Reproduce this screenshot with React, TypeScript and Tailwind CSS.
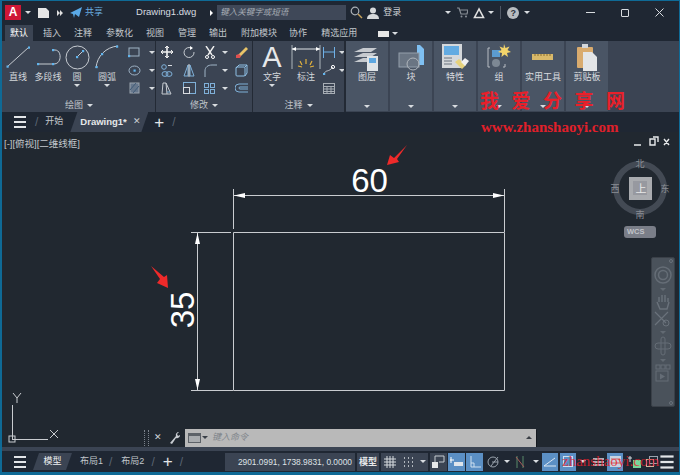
import React from 'react';

const Caret = ({ className = '', dim }: { className?: string; dim?: boolean }) => (
  <span className={`inline-block w-0 h-0 shrink-0 border-l-[3px] border-r-[3px] border-t-[3px] border-l-transparent border-r-transparent ${dim ? 'border-t-[#626a73]' : 'border-t-[#d8dce0]'} ${className}`} />
);

const Icon = ({ w, h, children, className = '' }: { w: number; h: number; children: React.ReactNode; className?: string }) => (
  <svg width={w} height={h} viewBox={`0 0 ${w} ${h}`} fill="none" className={`shrink-0 ${className}`}>
    {children}
  </svg>
);

const Dot = ({ x, y }: { x: number; y: number }) => <rect x={x - 1} y={y - 1} width="2.2" height="2.2" fill="#62b5ee" />;

const Burger = () => (
  <div className="flex flex-col gap-[3px] w-[12px]">
    <div className="h-[2px] bg-[#e2e5e8]" />
    <div className="h-[2px] bg-[#e2e5e8]" />
    <div className="h-[2px] bg-[#e2e5e8]" />
  </div>
);

const Slash = () => <span className="text-[#5a6472] text-[12px] font-light">/</span>;

const Tool = ({ w, label, caret, icon }: { w: number; label: string; caret?: boolean; icon: React.ReactNode }) => (
  <div className="flex flex-col items-center shrink-0" style={{ width: w }}>
    <div className="h-[26px] flex items-center justify-center">{icon}</div>
    <div className="text-[9px] leading-[12px] mt-[1px] text-[#d3d7db] whitespace-nowrap">{label}</div>
    {caret && <Caret className="mt-[1px]" />}
  </div>
);

const SmallRow = ({ children, caret, w = 21 }: { children: React.ReactNode; caret?: boolean; w?: number }) => (
  <div className="h-[18px] flex items-center gap-[4px]" style={{ width: w }}>
    {children}
    {caret && <Caret />}
  </div>
);

const PanelTitle = ({ text }: { text: string }) => (
  <div className="h-[15px] pt-[2px] flex items-center justify-center gap-[4px] text-[9px] text-[#c0c5ca]">
    {text}
    <Caret />
  </div>
);

const BigPanel = ({ label, icon }: { label: string; icon: React.ReactNode }) => (
  <div className="w-[42px] h-[70px] mr-[2px] bg-[#4a5565] flex flex-col items-center shrink-0">
    <div className="h-[28px] mt-[2px] flex items-center justify-center">{icon}</div>
    <div className="text-[9px] leading-[12px] text-[#d8dbdf] whitespace-nowrap">{label}</div>
    <Caret className="mt-auto mb-[3px]" />
  </div>
);

const tabs: [string, number][] = [
  ['插入', 10], ['注释', 13], ['参数化', 14], ['视图', 13], ['管理', 14], ['输出', 13], ['附加模块', 14], ['协作', 12], ['精选应用', 14],
];

const StatusCell = ({ w, active, children }: { w: number; active?: boolean; children?: React.ReactNode }) => (
  <div className={`h-[18px] flex items-center justify-center shrink-0 ${active ? 'bg-[#5b8fc4]' : ''}`} style={{ width: w }}>
    {children}
  </div>
);

export default function App() {
  return (
    <div className="w-[680px] h-[475px] relative overflow-hidden whitespace-nowrap bg-[#1f2733] border-t border-l-2 border-r border-b-[3px] border-[#0f6a96] flex flex-col text-[#d8dce0]" style={{ fontFamily: '"Liberation Sans", "Noto Sans CJK SC", sans-serif' }}>
      {/* title bar */}
      <div className="h-[23px] flex items-center shrink-0 relative">
        <div className="ml-[3px] w-[16px] h-[15px] bg-[#cf1736] text-white font-bold text-[12px] leading-[15px] text-center">A</div>
        <Caret className="ml-[4px]" />
        <svg width="12" height="10" viewBox="0 0 12 10" className="ml-[7px] shrink-0"><path d="M0 0h8l3 3v7H0z" fill="#e6e6e6" /></svg>
        <svg width="6" height="6" viewBox="0 0 6 6" className="ml-[7px] shrink-0"><path d="M0 0l3 3-3 3zM3 0l3 3-3 3z" fill="#e0e0e0" /></svg>
        <svg width="12" height="11" viewBox="0 0 12 11" className="ml-[7px] shrink-0"><path d="M0 6 12 0 9 10 5 7 4 11 3 7z" fill="#5aa9e6" /></svg>
        <span className="ml-[3px] text-[9px] text-[#6aaee0]">共享</span>
        <span className="ml-[33px] text-[9.5px] text-[#d8dce0]">Drawing1.dwg</span>
        <span className="ml-[14px] w-0 h-0 border-t-[3px] border-b-[3px] border-l-[3px] border-t-transparent border-b-transparent border-l-white" />
        <div className="ml-[4px] w-[129px] h-[15px] bg-[#3f4858] text-[8.5px] leading-[15px] italic text-[#a5abb3] pl-[3px]">键入关键字或短语</div>
        <svg width="13" height="13" viewBox="0 0 13 13" fill="none" className="ml-[4px] shrink-0"><circle cx="5" cy="5" r="3.8" stroke="#aab0b6" strokeWidth="1.2" /><path d="M8 8l4 4" stroke="#c9a35a" strokeWidth="1.5" /></svg>
        <svg width="12" height="12" viewBox="0 0 12 12" className="ml-[4px] shrink-0"><circle cx="6" cy="3.5" r="3" fill="#d6d8da" /><path d="M0 12c0-4 3-5 6-5s6 1 6 5z" fill="#d6d8da" /></svg>
        <span className="ml-[4px] text-[9px] text-[#d0d3d7]">登录</span>
        <Caret className="ml-[44px]" />
        <svg width="11" height="11" viewBox="0 0 11 11" fill="none" className="ml-[6px] shrink-0"><path d="M0 1h2l2 6h6l1-4H3" stroke="#8a9098" strokeWidth="1.2" /><circle cx="4.5" cy="9.5" r="1" fill="#8a9098" /><circle cx="9" cy="9.5" r="1" fill="#8a9098" /></svg>
        <svg width="12" height="12" viewBox="0 0 12 12" fill="none" className="ml-[5px] shrink-0"><path d="M6 2 1.5 10.5h9z" stroke="#e0e0e0" strokeWidth="1.6" /></svg>
        <Caret className="ml-[3px]" />
        <div className="ml-[6px] w-px h-[13px] bg-[#505865]" />
        <div className="ml-[6px] w-[12px] h-[12px] rounded-full bg-[#b8bcc0] text-[#2a303a] text-[9px] font-bold leading-[12px] text-center">?</div>
        <Caret className="ml-[5px]" />
        <div className="ml-[56px] w-[9px] h-[1px] bg-[#d8dce0]" />
        <div className="ml-[26px] w-[8px] h-[8px] border border-[#d8dce0] rounded-[1px]" />
        <svg width="9" height="9" viewBox="0 0 9 9" className="ml-[26px] shrink-0"><path d="M0.5 0.5l8 8M8.5 0.5l-8 8" stroke="#d8dce0" /></svg>
      </div>

      {/* ribbon tabs */}
      <div className="h-[17px] flex items-end shrink-0 text-[9px]">
        <div className="ml-[3px] w-[28px] h-[16px] bg-[#3b4453] leading-[16px] text-center text-white">默认</div>
        {tabs.map(([t, m]) => (
          <span key={t} className="leading-[16px] text-[#c2c7cc]" style={{ marginLeft: m }}>{t}</span>
        ))}
        <div className="ml-[21px] mb-[4px] w-[11px] h-[6px] bg-[#e6e6e6]" />
        <Caret className="ml-[3px] mb-[6px]" />
      </div>

      {/* ribbon */}
      <div className="h-[71px] bg-[#3b4453] flex shrink-0 pl-[1px]">
        <div className="w-[153px] flex flex-col border-r border-[#232a35] shrink-0">
          <div className="flex-1 flex pt-[3px]">
            <Tool w={30} label="直线" icon={<Icon w={24} h={22}><path d="M1 21 23 1" stroke="#c6cbd1" /><Dot x={1.5} y={20.5} /><Dot x={23} y={1.5} /></Icon>} />
            <Tool w={30} label="多段线" icon={<Icon w={25} h={18}><path d="M2 16h16M17 2h2c7 0 7 14-1 14" stroke="#c6cbd1" /><Dot x={2} y={16} /><Dot x={17} y={16} /><Dot x={17} y={2} /></Icon>} />
            <Tool w={28} label="圆" caret icon={<Icon w={25} h={25}><circle cx="12.5" cy="12.5" r="11.5" stroke="#c6cbd1" /><path d="M12 12l6-6" stroke="#c6cbd1" /><Dot x={12} y={12} /><Dot x={18} y={6} /></Icon>} />
            <Tool w={32} label="圆弧" caret icon={<Icon w={24} h={24}><path d="M1 23C2 11 11 2 23 1" stroke="#c6cbd1" /><Dot x={1.5} y={22} /><Dot x={7} y={9} /><Dot x={22} y={1.5} /></Icon>} />
            <div className="flex flex-col ml-[5px] mt-[-1px]">
              <SmallRow caret w={26}><Icon w={13} h={11}><rect x="1" y="1" width="10" height="8" stroke="#9fb3c6" /><Dot x={1} y={9} /></Icon><span className="w-[1px]" /></SmallRow>
              <SmallRow caret w={26}><Icon w={13} h={11}><ellipse cx="6.5" cy="5.5" rx="5.5" ry="4.5" stroke="#9fb3c6" /><Dot x={6.5} y={5.5} /></Icon><span className="w-[1px]" /></SmallRow>
              <SmallRow caret w={26}><Icon w={13} h={12}><rect x="2" y="1" width="9" height="10" fill="#66778c" stroke="#9aa3ae" /><path d="M2 8l6-7M5 11l6-7" stroke="#3f5a77" /></Icon><span className="w-[1px]" /></SmallRow>
            </div>
          </div>
          <PanelTitle text="绘图" />
        </div>

        <div className="w-[97px] flex flex-col border-r border-[#232a35] shrink-0">
          <div className="flex-1 pt-[2px] pl-[5px] grid grid-cols-[22px_21px_31px_20px] grid-rows-[18px_18px_18px] items-center">
            <Icon w={12} h={12}><path d="M6 0v12M0 6h12" stroke="#f0f0f0" strokeWidth="1.6" /><path d="M4 2l2-2 2 2M4 10l2 2 2-2M2 4 0 6l2 2M10 4l2 2-2 2" stroke="#f0f0f0" /></Icon>
            <Icon w={12} h={12}><path d="M9 2.5A5 5 0 1 0 11 6" stroke="#c6cbd1" /><path d="M7 0l3 2-3 2z" fill="#fff" /></Icon>
            <div className="flex items-center gap-[3px]"><Icon w={13} h={13}><path d="M2 0l6 9M10 0 4 9" stroke="#f0f0f0" strokeWidth="1.4" /><circle cx="3" cy="11" r="1.5" stroke="#fff" /><circle cx="9" cy="11" r="1.5" stroke="#fff" /></Icon><Caret className="ml-[2px]" /></div>
            <Icon w={13} h={12}><path d="M3 9 11 1l2 2-8 8z" fill="#e8c469" /><path d="M1 9l3-1 2 2-1 2H1z" fill="#e05050" /></Icon>
            <Icon w={12} h={13}><circle cx="3" cy="3" r="2.3" stroke="#7fb0d8" /><rect x="7" y="1" width="4" height="1" fill="#d8dce0" /><ellipse cx="4" cy="10" rx="3" ry="2.4" stroke="#7fb0d8" /><ellipse cx="8" cy="10" rx="3" ry="2.4" stroke="#7fb0d8" /></Icon>
            <Icon w={12} h={13}><path d="M5 1 1 12h4zM7 1l4 11H7z" stroke="#7fb0d8" /><path d="M6 0v13" stroke="#d8dce0" /></Icon>
            <div className="flex items-center gap-[3px]"><Icon w={13} h={13}><path d="M1 13V7c0-4 3-6 7-6h5" stroke="#9fb3c6" /></Icon><Caret className="ml-[2px]" /></div>
            <Icon w={13} h={13}><rect x="1" y="3" width="9" height="9" rx="1" stroke="#8fc0e6" /><path d="M1 4l3-3h8v8l-2 3M10 3l2-2" stroke="#8fc0e6" /></Icon>
            <Icon w={13} h={13}><path d="M1 12h5L5 1H2zM5 1l5 11H6" stroke="#c6cbd1" /><path d="M6 10h3" stroke="#7fb0d8" /></Icon>
            <Icon w={13} h={12}><rect x="0.5" y="0.5" width="12" height="11" stroke="#7fb0d8" /><rect x="0.5" y="5.5" width="6" height="6" stroke="#d8dce0" /></Icon>
            <div className="flex items-center gap-[3px]"><Icon w={11} h={11}><rect x="0.5" y="0.5" width="4" height="4" stroke="#7fb0d8" /><rect x="6.5" y="0.5" width="4" height="4" stroke="#7fb0d8" /><rect x="0.5" y="6.5" width="4" height="4" stroke="#7fb0d8" /><rect x="6.5" y="6.5" width="4" height="4" stroke="#7fb0d8" /></Icon><Caret className="ml-[4px]" /></div>
            <Icon w={13} h={10}><path d="M13 1H4a4 4 0 0 0 0 8h9M13 4H5a1 1 0 0 0 0 2h8" stroke="#7fb0d8" /></Icon>
          </div>
          <PanelTitle text="修改" />
        </div>

        <div className="w-[91px] flex flex-col shrink-0">
          <div className="flex-1 flex pt-[3px]">
            <div className="flex flex-col items-center w-[36px] ml-[1px]">
              <div className="h-[26px] leading-[26px] text-[29px] text-[#e6e8ea]">A</div>
              <div className="text-[9px] leading-[12px] mt-[1px] text-[#d3d7db]">文字</div>
              <Caret className="mt-[1px]" />
            </div>
            <Tool w={32} label="标注" icon={<Icon w={30} h={24}><path d="M1 0v24M29 0v24" stroke="#aeb5bc" /><path d="M1 4h28" stroke="#dfe2e6" /><path d="M1 4l4-2v4zM29 4l-4-2v4z" fill="#fff" /><path d="M15 14v5M9 16l2 4M21 16l-2 4M7 21l4 1M23 21l-4 1" stroke="#e2b23e" strokeWidth="1.2" /></Icon>} />
            <div className="flex flex-col ml-[1px] mt-[-1px]">
              <SmallRow caret><Icon w={12} h={11}><path d="M0.5 0v11M11.5 0v11M0.5 5h11" stroke="#6fb0e6" /></Icon></SmallRow>
              <SmallRow caret><Icon w={12} h={10}><path d="M1 9C3 4 5 8 10 2" stroke="#c6cbd1" /><circle cx="10" cy="2" r="1.6" stroke="#fff" /><Dot x={1} y={9} /></Icon></SmallRow>
              <SmallRow><Icon w={12} h={11}><rect x="0.5" y="0.5" width="11" height="10" stroke="#a8aeb5" /><path d="M0 3.5h12M0 6h12M0 8.5h12M4 3v8M8 3v8" stroke="#a8aeb5" /></Icon></SmallRow>
            </div>
          </div>
          <PanelTitle text="注释" />
        </div>

        <div className="w-[2px] bg-[#232a35]" />
        <BigPanel label="图层" icon={<Icon w={26} h={27}><path d="M0 8 9 4h14l-6 4zM0 13l9-4h14l-6 4zM0 18l9-4h14l-6 4z" fill="#c6cacf" /><rect x="13" y="12" width="11" height="15" fill="#dfe3e6" /><rect x="15" y="14" width="7" height="5" fill="#5ea7e0" /></Icon>} />
        <BigPanel label="块" icon={<Icon w={26} h={27}><path d="M19 1h3l4 4v16h-7z" fill="#7fc0f2" /><rect x="1" y="9" width="20" height="14" fill="#6a7583" stroke="#93a0ac" /><circle cx="15" cy="20" r="6" stroke="#b0b6bc" /></Icon>} />
        <BigPanel label="特性" icon={<Icon w={28} h={28}><rect x="1" y="1" width="20" height="24" fill="#d5d8db" /><rect x="3" y="3" width="15" height="9" fill="#63abe2" /><path d="M3 15h8M3 18h8M3 21h8" stroke="#69727e" /><path d="M14 19l4-3 7 6-4 4z" fill="#e6d27c" /><path d="M20 19l4-4 4 3-4 5z" fill="#f0f0f0" /></Icon>} />
        <BigPanel label="组" icon={<Icon w={24} h={26}><path d="M3 4H1v19h2M16 23h2v-3" stroke="#b7bdc4" /><rect x="5" y="6" width="8" height="7" fill="#5b9bd0" /><circle cx="9" cy="19" r="4" fill="#7d8894" /><path d="M17 0l1.500 4 4-1.500-2 3.500 3.500 2-4 1 1 4-3.500-2.500-3 2.500 0.500-4-4-1 3.500-2-2-3.500 4 1.500z" fill="#f2d46b" /></Icon>} />
        <BigPanel label="实用工具" icon={<Icon w={22} h={8}><rect x="0" y="1" width="21" height="6" fill="#d9b96a" /><path d="M3 1v2M6 1v2M9 1v2M12 1v2M15 1v2M18 1v2" stroke="#8a6e2f" /></Icon>} />
        <BigPanel label="剪贴板" icon={<Icon w={20} h={27}><rect x="0" y="3" width="16" height="21" rx="1" fill="#d9ab6e" /><rect x="5" y="0" width="6" height="4" fill="#d5d8db" /><path d="M6 8h9l5 5v14H6z" fill="#e3e5e7" /></Icon>} />
      </div>

      {/* file tabs */}
      <div className="h-[20px] flex items-center shrink-0 text-[9px]">
        <div className="ml-[12px]"><Burger /></div>
        <div className="ml-[9px]"><Slash /></div>
        <span className="ml-[7px] text-[#c2c7cc]">开始</span>
        <div className="ml-[7px] w-[78px] h-[20px] bg-[#3b4453] flex items-center pl-[10px] [clip-path:polygon(7px_0,100%_0,calc(100%-7px)_100%,0_100%)]">
          <span className="font-bold text-[9.5px] text-[#e6e8ea]">Drawing1*</span>
          <span className="ml-[6px] text-[9px] text-[#c9cdd2]">✕</span>
        </div>
        <span className="ml-[6px] text-[17px] leading-none font-light text-[#e2e5e8]">+</span>
        <div className="ml-[8px]"><Slash /></div>
      </div>

      {/* drawing area */}
      <div className="flex-1 relative bg-[#212830] overflow-hidden">
        <div className="absolute left-[2px] top-[6px] text-[9.5px] leading-[12px] text-[#c4c8cd]">[-][俯视][二维线框]</div>
        <svg className="absolute left-[-2px] top-[-132px]" width="680" height="475" viewBox="0 0 680 475" fill="none">
          <g stroke="#c9ccd0" strokeWidth="1">
            <path d="M233.500 232.500H504.500V390.500H233.500Z" />
            <path d="M233.500 189V229M504.500 189V232M233 195.500H505" />
            <path d="M191 232.500H231M191 390.500H233M197.500 232V390" />
          </g>
          <path d="M234 195.500 245 193V198ZM504 195.500 493 193V198ZM197.500 233 195 244H200ZM197.500 390 195 379H200Z" fill="#fff" />
          <text x="369.500" y="192" textAnchor="middle" fill="#fff" fontSize="33" fontFamily="Liberation Sans">60</text>
          <text transform="translate(194 310) rotate(-90)" textAnchor="middle" fill="#fff" fontSize="33" fontFamily="Liberation Sans">35</text>
          <path d="M387 165 390 155 394 158 407 145 397 159 399 162Z" fill="#ee2a2a" />
          <path d="M168 288 157 283 160 279 151 266 164 277 167 275Z" fill="#ee2a2a" />
          <g stroke="#c9ccd0">
            <path d="M12.500 405V440M12 439.500H48" />
            <rect x="9" y="436" width="6" height="6" />
            <path d="M13 393l4 5 4-5M17 398v5M50 430l8 8M58 430l-8 8" />
          </g>
          <circle cx="640" cy="188" r="24" stroke="#434a54" strokeWidth="6" />
          <rect x="629" y="177" width="23" height="23" fill="#a9abaf" />
          <rect x="633" y="181" width="14" height="14" fill="#9799a0" />
          <g fill="#8a8e94" fontSize="9" fontFamily="Noto Sans CJK SC" textAnchor="middle">
            <text x="640" y="167">北</text>
            <text x="640" y="218">南</text>
            <text x="615" y="192">西</text>
            <text x="665" y="192">东</text>
            <text x="641" y="193" fontSize="11" fill="#e8e8e8">上</text>
          </g>
          <path d="M634 145h7M650 139h5v6h-5zM653 137h5v5M664 139l5 6M669 139l-5 6" stroke="#e8eaec" strokeWidth="1.400" />
        </svg>
        <div className="absolute left-[622px] top-[94px] w-[32px] h-[12px] rounded-[3px] bg-[#7a7e88] text-[7.5px] leading-[12px] text-[#c0c3c8] pl-[3px] font-bold">WCS</div>
        <div className="absolute left-[649px] top-[125px] w-[24px] h-[150px] rounded-[2px] bg-[#4a525b] border border-[#3a4048] flex flex-col items-center">
          <div className="self-end mr-[1px] mt-[1px] w-[4px] h-[4px] rounded-full border border-[#6a727b]" />
          <Icon w={18} h={18} className="mt-[3px]"><circle cx="9" cy="9" r="8" stroke="#656d76" strokeWidth="1.500" /><circle cx="9" cy="9" r="4.500" stroke="#656d76" strokeWidth="1.500" /></Icon>
          <Caret dim className="mt-[4px]" />
          <Icon w={16} h={16} className="mt-[3px]"><path d="M4 8V3M7 8V1M10 8V1M13 8V4M2 8l3 7h7l2-7" stroke="#6a727b" strokeWidth="1.400" /></Icon>
          <Icon w={18} h={18} className="mt-[1px]"><path d="M1 1l11 11M14 1 1 14" stroke="#6a727b" strokeWidth="1.200" /><circle cx="12" cy="12" r="3" stroke="#6a727b" /></Icon>
          <Caret dim className="mt-[2px]" />
          <Icon w={18} h={20} className="mt-[2px]"><rect x="7" y="1" width="4" height="18" rx="2" stroke="#656d76" /><rect x="1" y="7" width="16" height="6" rx="3" stroke="#656d76" /></Icon>
          <Caret dim className="mt-[3px]" />
          <Icon w={16} h={19} className="mt-[2px]"><rect x="1" y="1" width="4" height="4" stroke="#656d76" /><rect x="6" y="1" width="4" height="4" stroke="#656d76" /><rect x="11" y="1" width="4" height="4" stroke="#656d76" /><rect x="1" y="7" width="12" height="10" stroke="#656d76" /><path d="M5 9.500l5 3-5 3z" fill="#656d76" /></Icon>
          <div className="self-end mr-[1px] mt-auto mb-[1px] w-[4px] h-[4px] rounded-full border border-[#6a727b]" />
        </div>

        {/* command line */}
        <div className="absolute left-[142px] bottom-[0px] h-[19px] flex items-center">
          <div className="w-[5px] h-[16px] border-x border-dotted border-[#7c838c]" />
          <span className="ml-[5px] text-[9px] text-[#cfd3d8]">✕</span>
          <svg width="11" height="12" viewBox="0 0 11 12" className="ml-[7px] shrink-0"><path d="M1 11 7 4a3 3 0 0 1 3-4L8 2l1 2 2-1a3 3 0 0 1-4 3l-4 6z" fill="#c9cdd2" /></svg>
          <div className="ml-[5px] w-[351px] h-[18px] bg-[#b9b9b9] flex items-center pl-[3px] relative shadow-[1px_1px_0_#15191f]">
            <div className="w-[13px] h-[10px] border border-[#5d6268] bg-[#a9acaf] border-t-[3px]" />
            <span className="ml-[1px] w-0 h-0 border-l-[3px] border-r-[3px] border-t-[3px] border-l-transparent border-r-transparent border-t-[#3a4048]" />
            <span className="ml-[4px] text-[9px] italic text-[#80858b]">键入命令</span>
            <span className="absolute right-[4px] top-[7px] w-0 h-0 border-l-[3px] border-r-[3px] border-b-[3px] border-l-transparent border-r-transparent border-b-[#3a3f46]" />
          </div>
        </div>
      </div>

      {/* status bar */}
      <div className="h-[25px] shrink-0 border-t-[4px] border-[#3b4453] flex items-center text-[9px]">
        <div className="w-[223px] h-full flex items-center shrink-0">
          <div className="ml-[12px]"><Burger /></div>
          <div className="ml-[7px] w-[39px] h-[17px] bg-[#3b4453] text-center leading-[17px] text-[#eef0f2] [clip-path:polygon(6px_0,100%_0,calc(100%-6px)_100%,0_100%)]">模型</div>
          <span className="ml-[8px] text-[#c2c7cc]">布局1</span>
          <div className="ml-[6px]"><Slash /></div>
          <span className="ml-[9px] text-[#c2c7cc]">布局2</span>
          <div className="ml-[7px]"><Slash /></div>
          <span className="ml-[8px] text-[17px] leading-none text-[#e2e5e8]">+</span>
          <div className="ml-[7px]"><Slash /></div>
        </div>
        <div className="w-[130px] h-[18px] bg-[#3b4453] leading-[18px] text-right pr-[3px] text-[8.4px] text-[#dfe2e6] shrink-0">2901.0991, 1738.9831, 0.0000</div>
        <div className="ml-[2px] w-[22px] h-[18px] bg-[#3b4453] text-center leading-[18px] text-[#e6e8ea] font-bold text-[9px] shrink-0">模型</div>
        <div className="ml-[2px] w-[47px] h-[18px] bg-[#3b4453] flex items-center pl-[2px] shrink-0">
          <StatusCell w={14}><Icon w={12} h={12}><path d="M3 0v12M6 0v12M9 0v12M0 3h12M0 6h12M0 9h12" stroke="#d8dce0" /></Icon></StatusCell>
          <StatusCell w={22}><Icon w={10} h={10}><path d="M1 1h1M5 1h1M9 1h1M1 5h1M5 5h1M9 5h1M1 9h1M5 9h1M9 9h1" stroke="#d8dce0" strokeWidth="1.500" /></Icon></StatusCell>
          <Caret className="ml-[1px]" />
        </div>
        <div className="ml-[2px] w-[17px] h-[18px] bg-[#3b4453] flex items-center justify-center shrink-0">
          <Icon w={14} h={13}><rect x="0" y="7" width="6" height="6" fill="#e6e8ea" /><path d="M3 7V1h9v6H7" stroke="#c6cbd1" /></Icon>
        </div>
        <div className="ml-[1px]" />
        <StatusCell w={17} active><Icon w={13} h={11}><path d="M1 1v6M4 4H0" stroke="#fff" /><rect x="4" y="6" width="9" height="4" fill="#dfe5ec" /></Icon></StatusCell>
        <div className="w-px shrink-0" />
        <StatusCell w={17} active><Icon w={12} h={12}><path d="M2 0v11h10M2 7h3v4" stroke="#cfe0f0" /></Icon></StatusCell>
        <div className="w-px shrink-0" />
        <StatusCell w={18}><Icon w={12} h={12}><circle cx="6" cy="6" r="5" stroke="#9aa3ae" /><path d="M4 10 11 1M5 6h6" stroke="#9aa3ae" /></Icon></StatusCell>
        <StatusCell w={9}><Caret /></StatusCell>
        <StatusCell w={18}><Icon w={10} h={12}><path d="M2 0v12M8 0v12" stroke="#5a8a6a" /><path d="M1 1l8 10" stroke="#a85a5a" /></Icon></StatusCell>
        <StatusCell w={13}><Caret /></StatusCell>
        <StatusCell w={16} active><Icon w={12} h={10}><path d="M0 9 11 1M0 9h12" stroke="#dbe7f2" /></Icon></StatusCell>
        <div className="w-[2px] shrink-0" />
        <StatusCell w={16} active><Icon w={10} h={11}><rect x="0.500" y="0.500" width="9" height="10" stroke="#cfe0f0" /></Icon></StatusCell>
        <StatusCell w={14}><Caret /></StatusCell>
        <StatusCell w={17}><Icon w={11} h={10}><path d="M0 2h11M0 5h11M0 8h11" stroke="#d8dce0" strokeWidth="1.500" /></Icon></StatusCell>
        <StatusCell w={16} active><Icon w={11} h={11}><rect x="0" y="0" width="11" height="11" fill="#c6d4e3" /><path d="M1 3h9M1 7h9" stroke="#d05a5a" /></Icon></StatusCell>
        <StatusCell w={22}><Icon w={13} h={12}><rect x="5" y="4" width="8" height="8" fill="#76d69a" /><path d="M2 0v6M0 2h4" stroke="#d8dce0" /></Icon></StatusCell>
        <StatusCell w={14}><Icon w={12} h={11}><rect x="0.500" y="3.500" width="7" height="7" stroke="#cdb6a0" /><rect x="3.500" y="0.500" width="8" height="7" stroke="#9aa3ae" /></Icon></StatusCell>
        <div className="ml-[2px] scale-110"><Burger /></div>
      </div>

      {/* watermark */}
      <div className="absolute left-[478px] top-[87px] flex gap-[12.5px] text-[19px] leading-[24px] font-bold text-[#e8202a]" style={{ fontFamily: '"Noto Sans CJK SC", serif' }}>
        <span>我</span><span>爱</span><span>分</span><span>享</span><span>网</span>
      </div>
      <div className="absolute left-[479px] top-[117px] text-[15px] leading-[18px] font-bold text-[#e0202a]" style={{ fontFamily: '"Liberation Serif", serif' }}>www.zhanshaoyi.com</div>
      <div className="absolute left-[560px] top-[451px] text-[15px] leading-[18px] text-[#e8202a]/80" style={{ fontFamily: '"Liberation Serif", serif' }}>zhanshaoyi.com</div>
    </div>
  );
}
